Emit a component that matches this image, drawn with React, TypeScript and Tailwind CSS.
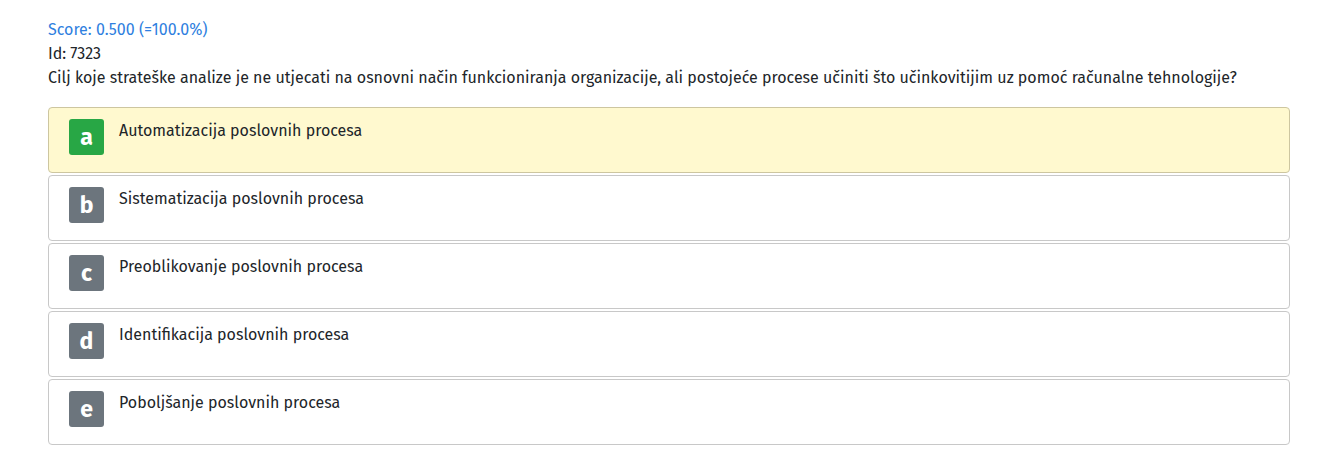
const OPTIONS = [
  { letter: "a", text: "Automatizacija poslovnih procesa", correct: true },
  { letter: "b", text: "Sistematizacija poslovnih procesa", correct: false },
  { letter: "c", text: "Preoblikovanje poslovnih procesa", correct: false },
  { letter: "d", text: "Identifikacija poslovnih procesa", correct: false },
  { letter: "e", text: "Poboljšanje poslovnih procesa", correct: false },
];

export default function App() {
  return (
    <div
      className="min-h-[459px] bg-white pl-[48px] pr-[45px] pt-[18px] text-[16px] leading-[24px] text-[#212529]"
      style={{ fontFamily: '"Fira Sans", "Noto Sans", sans-serif' }}
    >
      <div className="text-[#2f7fe0]">Score: 0.500 (=100.0%)</div>
      <div>Id: 7323</div>
      <div>
        Cilj koje strateške analize je ne utjecati na osnovni način funkcioniranja organizacije, ali postojeće procese učiniti što učinkovitijim uz pomoć računalne tehnologije?
      </div>

      <div className="mt-[17px] flex flex-col gap-[2px]">
        {OPTIONS.map((o) => (
          <div
            key={o.letter}
            className={
              o.correct
                ? "flex h-[66px] items-start rounded-[4px] border border-[#cdc6a0] bg-[#fff9cf] pl-[20px] pt-[11px]"
                : "flex h-[66px] items-start rounded-[4px] border border-[#c8c8c8] bg-white pl-[20px] pt-[11px]"
            }
          >
            <div
              className={
                o.correct
                  ? "flex h-[36px] w-[35px] items-center justify-center rounded-[3px] bg-[#28a745] text-[23px] font-bold text-white"
                  : "flex h-[36px] w-[35px] items-center justify-center rounded-[3px] bg-[#6c757d] text-[23px] font-bold text-white"
              }
            >
              {o.letter}
            </div>
            <div className="ml-[15px]">{o.text}</div>
          </div>
        ))}
      </div>
    </div>
  );
}
